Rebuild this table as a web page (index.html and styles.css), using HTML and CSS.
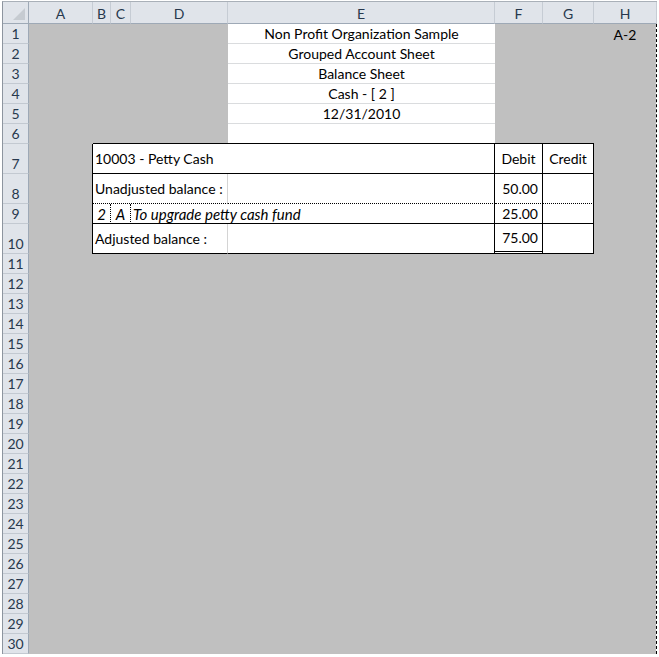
FILE: index.html
```html
<!DOCTYPE html>
<html>
<head>
<meta charset="utf-8">
<link rel="stylesheet" href="styles.css">
</head>
<body>
<div class="sheet">
  <div class="row hdr">
    <div class="ch corner"><span class="tri"></span></div>
    <div class="ch">A</div>
    <div class="ch">B</div>
    <div class="ch">C</div>
    <div class="ch">D</div>
    <div class="ch">E</div>
    <div class="ch">F</div>
    <div class="ch">G</div>
    <div class="ch">H</div>
  </div>
  <div class="body">
    <div class="row r20">
      <div class="rh">1</div>
      <div class="g span4"></div>
      <div class="w gl c">Non Profit Organization Sample</div>
      <div class="g span2"></div>
      <div class="g c">A-2</div>
    </div>
    <div class="row r20">
      <div class="rh">2</div>
      <div class="g span4"></div>
      <div class="w gl c">Grouped Account Sheet</div>
      <div class="g span3"></div>
    </div>
    <div class="row r20">
      <div class="rh">3</div>
      <div class="g span4"></div>
      <div class="w gl c">Balance Sheet</div>
      <div class="g span3"></div>
    </div>
    <div class="row r20">
      <div class="rh">4</div>
      <div class="g span4"></div>
      <div class="w gl c">Cash - [ 2 ]</div>
      <div class="g span3"></div>
    </div>
    <div class="row r20">
      <div class="rh">5</div>
      <div class="g span4"></div>
      <div class="w gl c">12/31/2010</div>
      <div class="g span3"></div>
    </div>
    <div class="row r20">
      <div class="rh">6</div>
      <div class="g"></div>
      <div class="g bb span3"></div>
      <div class="w bb"></div>
      <div class="g bb span2"></div>
      <div class="g"></div>
    </div>
    <div class="row r30">
      <div class="rh">7</div>
      <div class="g br"></div>
      <div class="w bb br span4 l">10003 - Petty Cash</div>
      <div class="w bb br c">Debit</div>
      <div class="w bb br c">Credit</div>
      <div class="g"></div>
    </div>
    <div class="row r30">
      <div class="rh">8</div>
      <div class="g br"></div>
      <div class="w bd brl span3 l">Unadjusted balance :</div>
      <div class="w bd br"></div>
      <div class="w bd br r">50.00</div>
      <div class="w bd br"></div>
      <div class="g"></div>
    </div>
    <div class="row r20">
      <div class="rh">9</div>
      <div class="g br"></div>
      <div class="w bb brd r i">2</div>
      <div class="w bb brd c i">A</div>
      <div class="w bb br span2 l i">To upgrade petty cash fund</div>
      <div class="w bb br r">25.00</div>
      <div class="w bb br"></div>
      <div class="g"></div>
    </div>
    <div class="row r30">
      <div class="rh">10</div>
      <div class="g br"></div>
      <div class="w bb brl span3 l">Adjusted balance :</div>
      <div class="w bb br"></div>
      <div class="w bdbl br r">75.00</div>
      <div class="w bb br"></div>
      <div class="g"></div>
    </div>
    <div class="row r20"><div class="rh">11</div><div class="g span8"></div></div>
    <div class="row r20"><div class="rh">12</div><div class="g span8"></div></div>
    <div class="row r20"><div class="rh">13</div><div class="g span8"></div></div>
    <div class="row r20"><div class="rh">14</div><div class="g span8"></div></div>
    <div class="row r20"><div class="rh">15</div><div class="g span8"></div></div>
    <div class="row r20"><div class="rh">16</div><div class="g span8"></div></div>
    <div class="row r20"><div class="rh">17</div><div class="g span8"></div></div>
    <div class="row r20"><div class="rh">18</div><div class="g span8"></div></div>
    <div class="row r20"><div class="rh">19</div><div class="g span8"></div></div>
    <div class="row r20"><div class="rh">20</div><div class="g span8"></div></div>
    <div class="row r20"><div class="rh">21</div><div class="g span8"></div></div>
    <div class="row r20"><div class="rh">22</div><div class="g span8"></div></div>
    <div class="row r20"><div class="rh">23</div><div class="g span8"></div></div>
    <div class="row r20"><div class="rh">24</div><div class="g span8"></div></div>
    <div class="row r20"><div class="rh">25</div><div class="g span8"></div></div>
    <div class="row r20"><div class="rh">26</div><div class="g span8"></div></div>
    <div class="row r20"><div class="rh">27</div><div class="g span8"></div></div>
    <div class="row r20"><div class="rh">28</div><div class="g span8"></div></div>
    <div class="row r20"><div class="rh">29</div><div class="g span8"></div></div>
    <div class="row r20"><div class="rh">30</div><div class="g span8"></div></div>
  </div>
</div>
</body>
</html>
```
FILE: styles.css
```css
html, body {
  margin: 0;
  padding: 0;
  background: #ffffff;
}
body {
  font-family: Lato, "Liberation Sans", sans-serif;
  font-size: 14px;
  color: #000;
}
.sheet {
  margin: 1px 0 0 2px;
  width: 654px;
  border-left: 1px solid #8d959f;
  border-top: 1px solid #a9b0b8;
}
.row {
  display: grid;
  grid-template-columns: 26px 64px 18px 20px 97px 267px 48px 51px 1fr;
}
.hdr {
  height: 22px;
}
.ch {
  box-sizing: border-box;
  background: #e0e4ea;
  border-right: 1px solid #c6ccd4;
  border-bottom: 1px solid #9ea9b6;
  color: #27384d;
  display: flex;
  align-items: center;
  justify-content: center;
  padding-top: 1px;
}
.corner {
  position: relative;
  border-right-color: #9ea9b6;
}
.tri {
  position: absolute;
  right: 3px;
  bottom: 3px;
  width: 0;
  height: 0;
  border-left: 12px solid transparent;
  border-bottom: 12px solid #c6cbd1;
}
.body {
  box-sizing: border-box;
  width: 654px;
  border-right: 1px dashed #000;
}
.r20 { height: 20px; }
.r30 { height: 30px; }
.rh {
  box-sizing: border-box;
  background: #e0e4ea;
  border-right: 1px solid #9ea9b6;
  border-bottom: 1px solid #c3c9d1;
  color: #27384d;
  display: flex;
  align-items: flex-end;
  justify-content: center;
  line-height: 17px;
  padding-bottom: 1px;
}
.g, .w {
  box-sizing: border-box;
  display: flex;
  align-items: center;
  white-space: nowrap;
  overflow: hidden;
}
.g { background: #c0c0c0; }
.w { background: #ffffff; }
.gl { border-bottom: 1px solid #dadcde; }
.bb { border-bottom: 1px solid #000; }
.bd { border-bottom: 1px dotted #000; }
.bdbl { border-bottom: 3px double #000; }
.br { border-right: 1px solid #000; }
.brd { border-right: 1px dotted #000; }
.brl { border-right: 1px solid #d4d4d4; }
.c { justify-content: center; }
.l { padding-left: 2px; }
.r { justify-content: flex-end; padding-right: 4px; }
.i { font-style: italic; font-size: 15px; }
.span2 { grid-column: span 2; }
.span3 { grid-column: span 3; }
.span4 { grid-column: span 4; }
.span8 { grid-column: span 8; }
```
